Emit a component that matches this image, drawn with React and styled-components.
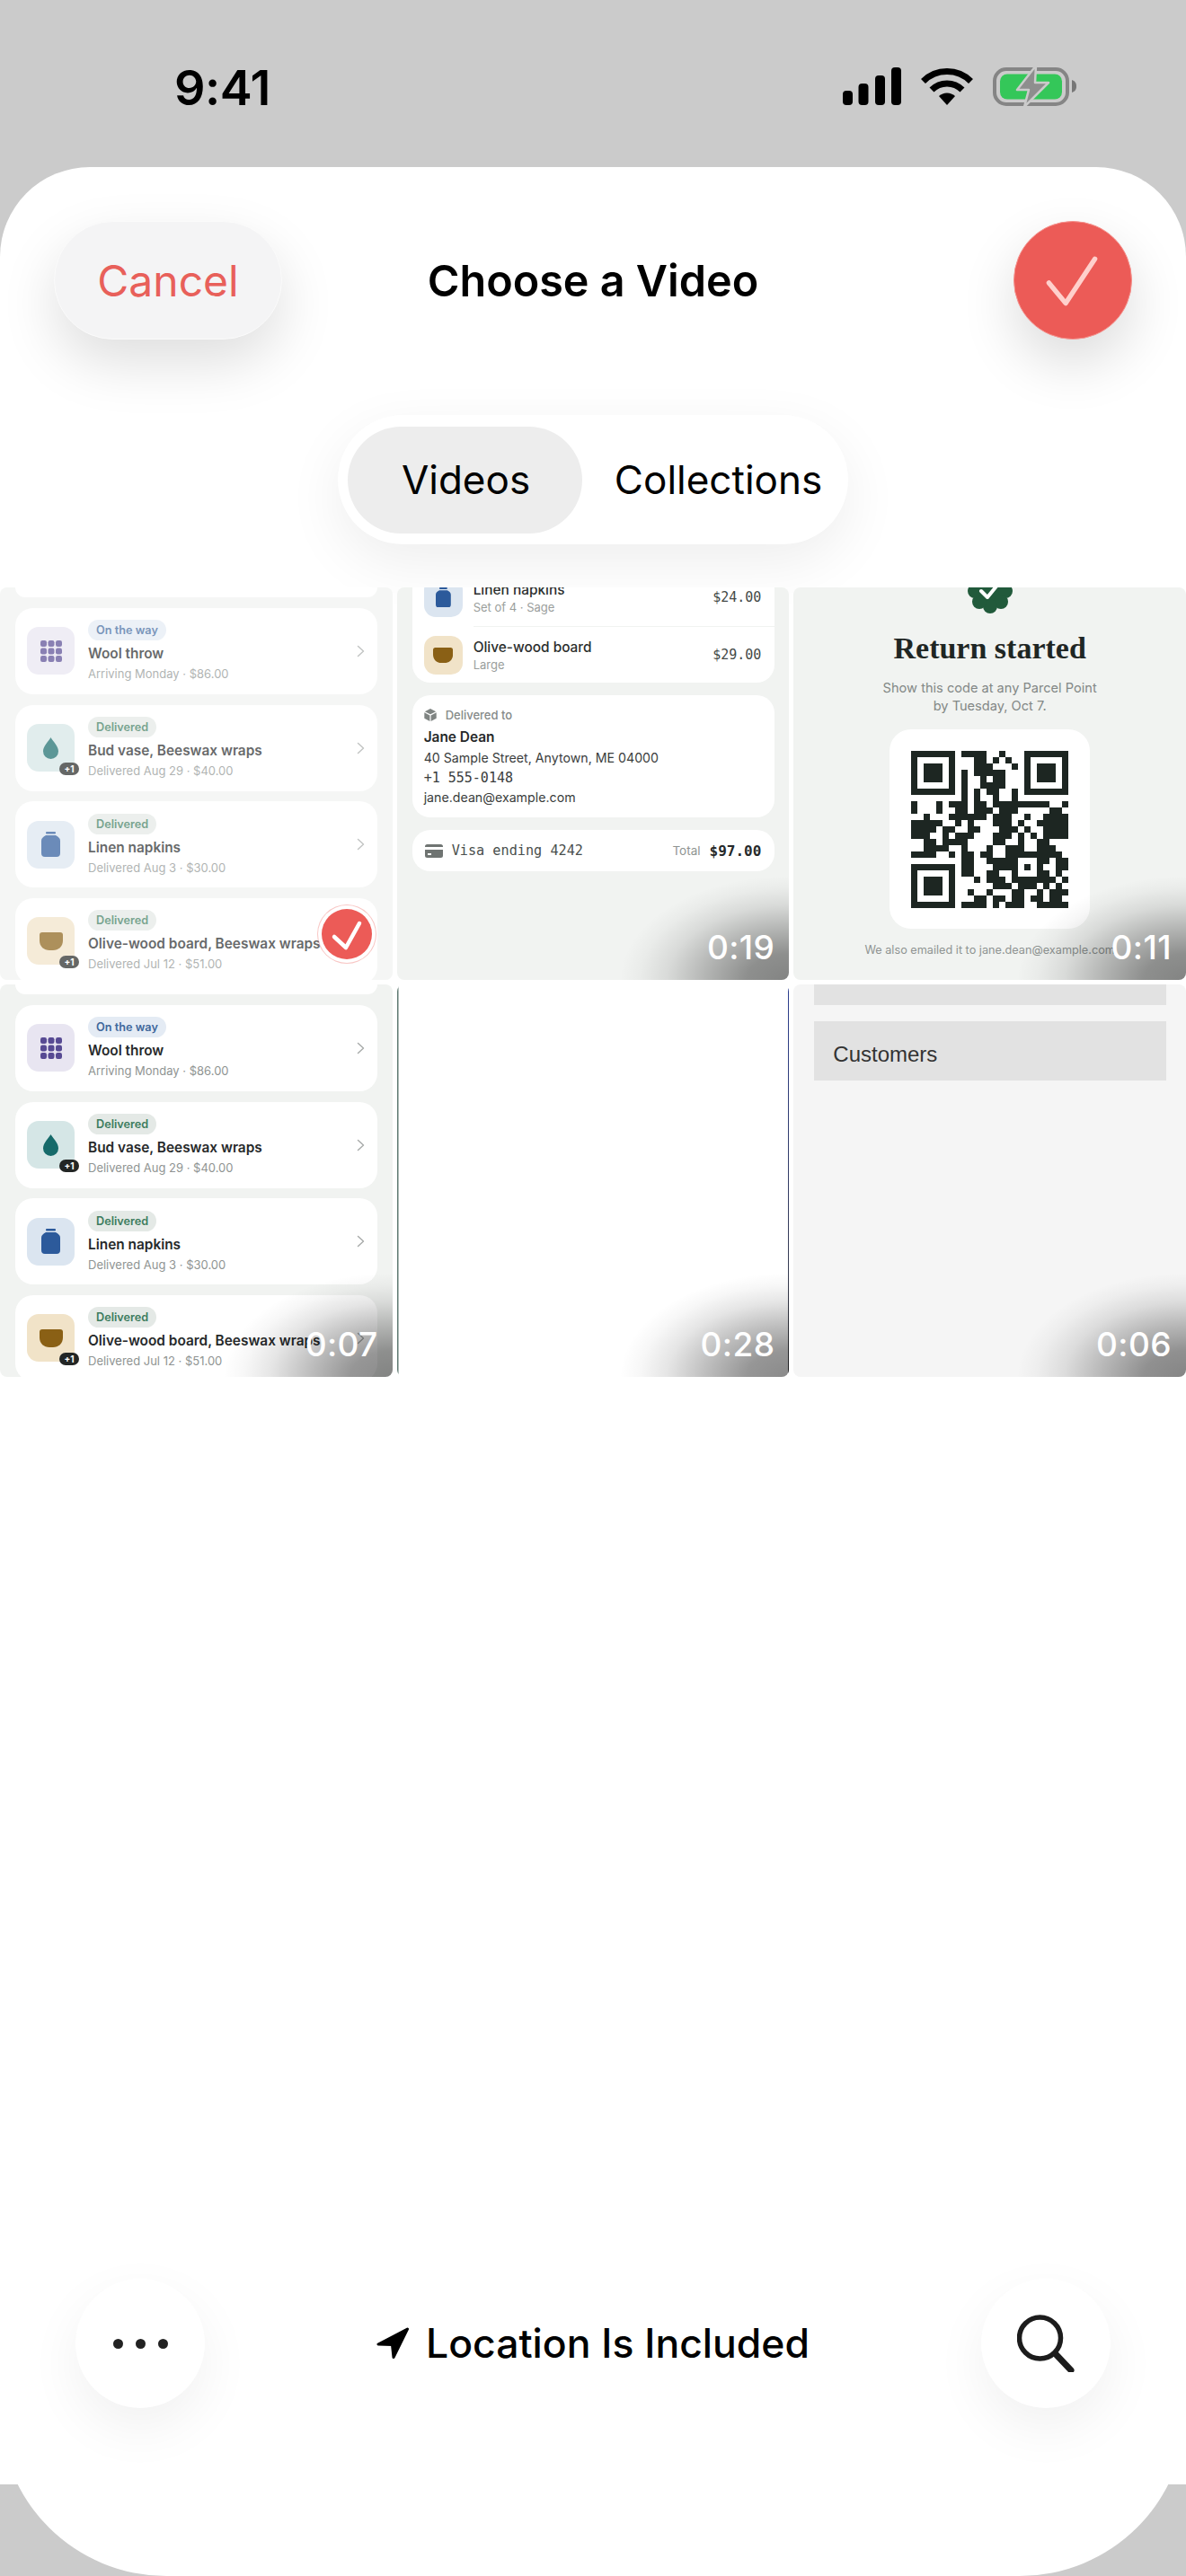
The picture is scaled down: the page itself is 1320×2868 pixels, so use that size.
import React from "react";
import styled, { createGlobalStyle } from "styled-components";

const Global = createGlobalStyle`
  html, body { margin: 0; padding: 0; background: #cbcbcb; }
  * { box-sizing: border-box; }
  body { font-family: Inter, "Liberation Sans", sans-serif; }
`;

const MONO = `"DejaVu Sans Mono", "Liberation Mono", monospace`;

const Page = styled.div`
  width: 1320px;
  height: 2868px;
  display: flex;
  flex-direction: column;
  background: #cbcbcb;
  overflow: hidden;
`;
const StatusBar = styled.div`
  height: 186px;
  flex: none;
  padding: 75px 122px 0 194px;
  display: flex;
  justify-content: space-between;
  align-items: flex-start;
`;
const Clock = styled.div`
  font-size: 54px;
  line-height: 46px;
  font-weight: 600;
  color: #000;
  letter-spacing: -0.5px;
`;
const StatusIcons = styled.div`
  display: flex;
  align-items: center;
  gap: 22px;
  height: 42px;
`;
const Sheet = styled.div`
  flex: 1;
  background: #fff;
  border-radius: 100px 100px 185px 185px;
  display: flex;
  flex-direction: column;
`;
const Header = styled.div`
  padding: 60px 60px 0;
  display: grid;
  grid-template-columns: 1fr auto 1fr;
  align-items: center;
`;
const CancelButton = styled.div`
  justify-self: start;
  width: 254px;
  height: 132px;
  border-radius: 66px;
  background: #f4f4f5;
  border: 1.5px solid #fbfbfb;
  box-shadow: 0 26px 62px rgba(0, 0, 0, 0.13);
  color: #e8605a;
  font-size: 48px;
  display: flex;
  align-items: center;
  justify-content: center;
`;
const Title = styled.div`
  font-size: 48.5px;
  font-weight: 600;
  color: #000;
`;
const ConfirmButton = styled.div`
  justify-self: end;
  width: 132px;
  height: 132px;
  border-radius: 50%;
  background: #ec5b57;
  border: 1.5px solid #f58f8a;
  box-shadow: 0 26px 62px rgba(0, 0, 0, 0.14);
  display: flex;
`;
const Segments = styled.div`
  align-self: center;
  margin-top: 84px;
  width: 568px;
  height: 144px;
  border-radius: 72px;
  padding: 12px 11px;
  background: #fff;
  box-shadow: 0 20px 64px rgba(0, 0, 0, 0.07);
  display: flex;
  align-items: center;
`;
const Segment = styled.div`
  flex: ${(p) => (p.$active ? "0 0 261px" : "1")};
  height: 119px;
  border-radius: 60px;
  background: ${(p) => (p.$active ? "#ededed" : "transparent")};
  display: flex;
  align-items: center;
  justify-content: center;
  padding-left: ${(p) => (p.$active ? 2 : 18)}px;
  font-size: 44px;
  color: #000;
`;
const Grid = styled.div`
  margin-top: 48px;
  display: grid;
  grid-template-columns: repeat(3, 1fr);
  grid-auto-rows: 437px;
  gap: 5px;
`;
const Cell = styled.div`
  position: relative;
  overflow: hidden;
  border-radius: 8px;
  background: ${(p) => p.$bg || "#f1f3f1"};
  color: #26292a;
`;
const BlankCell = styled(Cell)`
  background: linear-gradient(#2b3d8f, #3a3a3a) right / 1.5px 100% no-repeat,
    linear-gradient(#5f7a72, #5f7a72) left / 1.5px 100% no-repeat, #fff;
`;
const Wash = styled.div`
  position: absolute;
  inset: 0;
  background: rgba(255, 255, 255, 0.3);
`;
const TimeShade = styled.div`
  position: absolute;
  inset: 0;
  display: flex;
  align-items: flex-end;
  justify-content: flex-end;
  padding: 0 16px 14px 0;
  background: radial-gradient(
    ellipse 188px 116px at 100% 100%,
    rgba(0, 0, 0, 0.46) 0,
    rgba(0, 0, 0, 0.41) 25%,
    rgba(0, 0, 0, 0.25) 50%,
    rgba(0, 0, 0, 0.1) 72%,
    rgba(0, 0, 0, 0.03) 88%,
    rgba(0, 0, 0, 0) 100%
  );
  color: #fff;
  font-size: 37px;
  line-height: 44px;
  font-weight: 500;
  letter-spacing: 0.4px;
`;
const PickBadge = styled.div`
  position: absolute;
  right: 23px;
  bottom: 23px;
  width: 56px;
  height: 56px;
  border-radius: 50%;
  background: #ec5b57;
  box-shadow: 0 0 0 4px #fff, 0 0 0 5px rgba(236, 91, 87, 0.35);
  display: flex;
`;

/* order list shot */
const List = styled.div`
  display: flex;
  flex-direction: column;
  gap: 11.67px;
  padding: 0 17px;
`;
const CardStub = styled.div`
  height: 11.33px;
  background: #fff;
  border-radius: 0 0 18px 18px;
`;
const OrderCard = styled.div`
  flex: none;
  height: 96px;
  background: #fff;
  border-radius: 20px;
  padding: 0 14px 0 13px;
  display: flex;
  align-items: center;
  gap: 15px;
`;
const Thumb = styled.div`
  position: relative;
  flex: none;
  width: ${(p) => p.$size || 53}px;
  height: ${(p) => p.$size || 53}px;
  border-radius: 13px;
  background: ${(p) => p.$bg};
  display: flex;
  align-items: center;
  justify-content: center;
`;
const MoreBadge = styled.div`
  position: absolute;
  right: -5px;
  bottom: -4px;
  width: 22px;
  height: 14px;
  border-radius: 7px;
  background: #232625;
  color: #fff;
  font-size: 10px;
  font-weight: 700;
  line-height: 14px;
  text-align: center;
`;
const OrderText = styled.div`
  flex: 1;
  min-width: 0;
  padding-top: 2px;
  white-space: nowrap;
`;
const Pill = styled.div`
  display: inline-block;
  height: 23px;
  padding: 0 9px;
  border-radius: 12px;
  font-size: 12.7px;
  line-height: 23px;
  font-weight: 600;
  background: ${(p) => (p.$way ? "#e4ebf4" : "#e4e9e6")};
  color: ${(p) => (p.$way ? "#40689c" : "#3d7c5e")};
  vertical-align: top;
`;
const OrderTitle = styled.div`
  margin-top: 4px;
  font-size: 15.4px;
  line-height: 22px;
  font-weight: 600;
  color: #26292a;
`;
const OrderSub = styled.div`
  font-size: 13px;
  line-height: 22px;
  color: #8f9492;
`;

/* receipt shot */
const Receipt = styled.div`
  display: flex;
  flex-direction: column;
  gap: 14px;
  padding: 0 16px 0 17px;
`;
const Panel = styled.div`
  background: #fff;
  border-radius: 20px;
`;
const ItemsPanel = styled(Panel)`
  margin-top: -21px;
  padding-left: 13px;
`;
const ItemRow = styled.div`
  display: flex;
  align-items: center;
  gap: 12px;
  height: ${(p) => p.$h}px;
  padding-right: 15px;
`;
const ItemText = styled.div`
  flex: 1;
`;
const ItemName = styled.div`
  font-size: 15.4px;
  line-height: 21px;
  font-weight: 500;
  color: #2c2f2e;
`;
const ItemNote = styled.div`
  font-size: 13px;
  line-height: 18px;
  color: #9a9e9c;
`;
const Price = styled.div`
  font-family: ${MONO};
  font-size: 15px;
  color: #444a48;
`;
const Divider = styled.div`
  height: 1px;
  margin-left: 55px;
  background: #f1f3f1;
`;
const AddressPanel = styled(Panel)`
  height: 136px;
  padding: 12px 13px 0;
`;
const AddressHead = styled.div`
  display: flex;
  align-items: center;
  gap: 10px;
  height: 20px;
  font-size: 13px;
  font-weight: 500;
  color: #858a88;
`;
const AddressName = styled.div`
  margin-top: 3px;
  font-size: 15.4px;
  line-height: 24px;
  font-weight: 600;
  color: #26292a;
`;
const AddressLine = styled.div`
  font-size: ${(p) => (p.$mono ? 15 : 14.2)}px;
  line-height: 22px;
  color: #3a3d3c;
  font-family: ${(p) => (p.$mono ? MONO : "inherit")};
`;
const PayPanel = styled(Panel)`
  height: 46px;
  padding: 0 15px 0 14px;
  display: flex;
  align-items: center;
  gap: 10px;
`;
const PayName = styled.div`
  flex: 1;
  font-family: ${MONO};
  font-size: 15.2px;
  color: #4a4f4d;
`;
const PayLabel = styled.div`
  font-size: 13.5px;
  color: #8f9492;
`;
const PayTotal = styled.div`
  font-family: ${MONO};
  font-size: 16px;
  font-weight: 700;
  color: #26292a;
`;

/* return shot */
const ReturnShot = styled.div`
  display: flex;
  flex-direction: column;
  align-items: center;
`;
const Seal = styled.div`
  margin-top: -21px;
  display: flex;
`;
const ReturnTitle = styled.div`
  margin-top: 19px;
  font-family: "Liberation Serif", serif;
  font-weight: 700;
  font-size: 34px;
  line-height: 40px;
  color: #1f2624;
`;
const ReturnNote = styled.div`
  margin-top: 15px;
  font-size: 14.6px;
  line-height: 19.5px;
  text-align: center;
  color: #838886;
`;
const QrCard = styled.div`
  margin-top: 16px;
  width: 223px;
  height: 222px;
  border-radius: 24px;
  background: #fff;
  display: flex;
  align-items: center;
  justify-content: center;
`;
const ReturnFoot = styled.div`
  margin-top: 14px;
  font-size: 12.7px;
  line-height: 20px;
  color: #8f9492;
  white-space: nowrap;
`;

/* settings shot */
const SettingsShot = styled.div`
  padding: 0 22px 0 23px;
`;
const GreyRow = styled.div`
  height: ${(p) => p.$h}px;
  margin-bottom: 18px;
  background: #e2e2e2;
  padding: 23px 21px 0;
  font-family: "Liberation Sans", sans-serif;
  font-size: 24px;
  line-height: 28px;
  color: #333;
`;

/* footer */
const Footer = styled.div`
  margin-top: auto;
  height: 296px;
  flex: none;
  overflow: hidden;
  background: #fff;
  padding: 67px 84px 0;
  display: grid;
  grid-template-columns: 144px 1fr 144px;
  align-items: start;
`;
const RoundButton = styled.div`
  width: 144px;
  height: 144px;
  border-radius: 50%;
  background: #fff;
  box-shadow: 0 22px 60px rgba(0, 0, 0, 0.06);
  display: flex;
  align-items: center;
  justify-content: center;
  gap: 14px;
`;
const Dot = styled.span`
  width: 11px;
  height: 11px;
  border-radius: 50%;
  background: #222;
`;
const Location = styled.div`
  height: 144px;
  display: flex;
  align-items: center;
  justify-content: center;
  gap: 18px;
  font-size: 44.5px;
  font-weight: 500;
  color: #000;
`;
const Chin = styled.div`
  height: 102px;
  flex: none;
`;

const Signal = () => (
  <svg width="65" height="42" viewBox="0 0 65 42">
    <rect x="0" y="26" width="11" height="16" rx="4" fill="#000" />
    <rect x="17.5" y="18" width="11" height="24" rx="4" fill="#000" />
    <rect x="36" y="9" width="11" height="33" rx="4" fill="#000" />
    <rect x="54" y="0" width="11" height="42" rx="4" fill="#000" />
  </svg>
);
const Wifi = () => (
  <svg width="58" height="42" viewBox="0 0 58 42">
    <path d="M2.5 15.5 A37.5 37.5 0 0 1 55.5 15.5" fill="none" stroke="#000" strokeWidth="7" />
    <path d="M12 25 A24 24 0 0 1 46 25" fill="none" stroke="#000" strokeWidth="7" />
    <path d="M29 42 L20 32 A13 13 0 0 1 38 32 Z" fill="#000" />
  </svg>
);
const Battery = () => (
  <svg width="93" height="46" viewBox="0 0 93 46">
    <rect x="2" y="4" width="81" height="39" rx="13" fill="none" stroke="#858585" strokeWidth="4" />
    <rect x="8" y="9.5" width="69" height="28" rx="8" fill="#34c759" />
    <path d="M88 16 C91 17 93 19 93 23 C93 27 91 29 88 30 Z" fill="#777" />
    <path d="M48 0 L27 27 L40 27 L35 46 L62 19 L47 19 Z" fill="#8e8e8e" stroke="#cbcbcb" strokeWidth="2.5" strokeLinejoin="round" />
  </svg>
);
const Tick = ({ d, w, c }) => (
  <svg width="100%" height="100%" viewBox="0 0 132 132">
    <path d={d} fill="none" stroke={c} strokeWidth={w} strokeLinecap="round" strokeLinejoin="round" />
  </svg>
);
const SmallTick = () => (
  <svg width="56" height="56" viewBox="0 0 56 56">
    <path d="M14 31 L27 43 L42 16" fill="none" stroke="#fff" strokeWidth="4.5" strokeLinecap="round" strokeLinejoin="round" />
  </svg>
);
const Chevron = () => (
  <svg width="9" height="14" viewBox="0 0 9 14">
    <path d="M1.5 1.5 L7.5 7 L1.5 12.5" fill="none" stroke="#a7aaa9" strokeWidth="1.4" strokeLinecap="round" strokeLinejoin="round" />
  </svg>
);
const GridIcon = () => (
  <svg width="24" height="24" viewBox="0 0 24 24" fill="#574a93">
    {[0, 8.5, 17].flatMap((y) =>
      [0, 8.5, 17].map((x) => <rect key={`${x}-${y}`} x={x} y={y} width="7" height="7" rx="2.2" />)
    )}
  </svg>
);
const DropIcon = () => (
  <svg width="17" height="24" viewBox="0 0 17 24">
    <path d="M8.5 0 C11 4.5 17 9.5 17 15.5 A8.5 8.5 0 0 1 0 15.5 C0 9.5 6 4.5 8.5 0 Z" fill="#166a6a" />
  </svg>
);
const JarIcon = ({ s = 1 }) => (
  <svg width={21 * s} height={28 * s} viewBox="0 0 21 28" fill="#2c5a9b">
    <rect x="5" y="0" width="11" height="2.5" rx="1" />
    <path d="M5 4 H16 C19 6 21 7 21 10 V24 A4 4 0 0 1 17 28 H4 A4 4 0 0 1 0 24 V10 C0 7 2 6 5 4 Z" />
  </svg>
);
const BowlIcon = ({ s = 1 }) => (
  <svg width={26 * s} height={20 * s} viewBox="0 0 26 20">
    <path d="M3 0 H23 A3 3 0 0 1 26 3 V9 C26 16 21 20 15 20 H11 C5 20 0 16 0 9 V3 A3 3 0 0 1 3 0 Z" fill="#8a6015" />
  </svg>
);
const BoxIcon = () => (
  <svg width="14" height="14" viewBox="0 0 14 14" fill="#7f8482">
    <path d="M7 0 L13.2 3.2 L7 6.3 L0.8 3.2 Z" />
    <path d="M0.3 4.3 L6.4 7.4 V14 L0.3 10.8 Z" />
    <path d="M13.7 4.3 L7.6 7.4 V14 L13.7 10.8 Z" />
  </svg>
);
const CardIcon = () => (
  <svg width="20" height="15" viewBox="0 0 20 15">
    <path d="M2.5 0 H17.5 A2.5 2.5 0 0 1 20 2.5 V3 H0 V2.5 A2.5 2.5 0 0 1 2.5 0 Z" fill="#6f7472" />
    <path d="M0 6 H20 V12.5 A2.5 2.5 0 0 1 17.5 15 H2.5 A2.5 2.5 0 0 1 0 12.5 Z M3 10 V12 H7 V10 Z" fill="#6f7472" fillRule="evenodd" />
  </svg>
);
const SealIcon = () => (
  <svg width="50" height="50" viewBox="0 0 50 50">
    <g fill="#215a3b">
      <circle cx="25" cy="25" r="18" />
      {[0, 45, 90, 135, 180, 225, 270, 315].map((a) => (
        <circle key={a} cx={25 + 17 * Math.cos((a * Math.PI) / 180)} cy={25 + 17 * Math.sin((a * Math.PI) / 180)} r="8" />
      ))}
    </g>
    <path d="M15 25 L22 32 L35 16" fill="none" stroke="#fff" strokeWidth="4" strokeLinecap="round" strokeLinejoin="round" />
  </svg>
);
const Arrow = () => (
  <svg width="37" height="36" viewBox="0 0 37 36">
    <path d="M34.5 2 L2 19 L17.5 19.5 L19 33.5 Z" fill="#000" stroke="#000" strokeWidth="3" strokeLinejoin="round" />
  </svg>
);
const Search = () => (
  <svg width="64" height="64" viewBox="0 0 64 64">
    <circle cx="25.5" cy="26" r="23" fill="none" stroke="#1c1c1c" strokeWidth="5.5" />
    <path d="M43 44 L60 62" stroke="#1c1c1c" strokeWidth="7" strokeLinecap="round" />
  </svg>
);

const QR_ROWS = [
  "1111111011110010001111111",
  "1000001000110101001000001",
  "1011101000111000101011101",
  "1011101010111110001011101",
  "1011101010010110001011101",
  "1000001010011110001000001",
  "1111111010101100101111111",
  "0000000010100100100000000",
  "1000101110110111111111001",
  "1000100110111011100000110",
  "0010001111110111001001111",
  "1111100101000111010011111",
  "1111011001100011101001111",
  "1110010111000111010101111",
  "0011011110000110010011000",
  "0011110010001001110011100",
  "1111001011011001011001110",
  "0000000011001111110111011",
  "1111111011000111000010011",
  "1000001011001100111011010",
  "1011101000101110000001101",
  "1011101000000111011101010",
  "1011101001001000110010111",
  "1000001000110110110110110",
  "1111111011110101110011111",
];
const qrCell = (x, y) => {
  const dx = Math.abs(x - 18);
  const dy = Math.abs(y - 18);
  if (dx <= 2 && dy <= 2) return Math.max(dx, dy) !== 1;
  return QR_ROWS[y][x] === "1";
};
const Qr = () => (
  <svg width="175" height="175" viewBox="0 0 25 25" shapeRendering="crispEdges">
    {QR_ROWS.flatMap((row, y) =>
      [...row].map((_, x) => (qrCell(x, y) ? <rect key={`${x}-${y}`} x={x} y={y} width="1" height="1" fill="#1d2622" /> : null))
    )}
  </svg>
);

const ORDERS = [
  { icon: <GridIcon />, bg: "#e8e5f1", way: true, status: "On the way", title: "Wool throw", sub: "Arriving Monday · $86.00" },
  { icon: <DropIcon />, bg: "#d5e6e6", more: true, status: "Delivered", title: "Bud vase, Beeswax wraps", sub: "Delivered Aug 29 · $40.00" },
  { icon: <JarIcon />, bg: "#dbe5f0", status: "Delivered", title: "Linen napkins", sub: "Delivered Aug 3 · $30.00" },
  { icon: <BowlIcon />, bg: "#f1e3c8", more: true, status: "Delivered", title: "Olive-wood board, Beeswax wraps", sub: "Delivered Jul 12 · $51.00" },
];

const OrderList = () => (
  <List>
    <CardStub />
    {ORDERS.map((o) => (
      <OrderCard key={o.title}>
        <Thumb $bg={o.bg}>
          {o.icon}
          {o.more && <MoreBadge>+1</MoreBadge>}
        </Thumb>
        <OrderText>
          <Pill $way={o.way}>{o.status}</Pill>
          <OrderTitle>{o.title}</OrderTitle>
          <OrderSub>{o.sub}</OrderSub>
        </OrderText>
        <Chevron />
      </OrderCard>
    ))}
  </List>
);

const Time = ({ children }) => <TimeShade>{children}</TimeShade>;

export default function App() {
  return (
    <Page>
      <Global />
      <StatusBar>
        <Clock>9:41</Clock>
        <StatusIcons>
          <Signal />
          <Wifi />
          <Battery />
        </StatusIcons>
      </StatusBar>
      <Sheet>
        <Header>
          <CancelButton>Cancel</CancelButton>
          <Title>Choose a Video</Title>
          <ConfirmButton>
            <Tick d="M39 69 L58 92 L91 42" w={5.5} c="#ffd0cc" />
          </ConfirmButton>
        </Header>
        <Segments>
          <Segment $active>Videos</Segment>
          <Segment>Collections</Segment>
        </Segments>
        <Grid>
          <Cell>
            <OrderList />
            <Wash />
            <PickBadge>
              <SmallTick />
            </PickBadge>
          </Cell>
          <Cell>
            <Receipt>
              <ItemsPanel>
                <ItemRow $h={64}>
                  <Thumb $size={43} $bg="#dbe5f0">
                    <JarIcon s={0.8} />
                  </Thumb>
                  <ItemText>
                    <ItemName>Linen napkins</ItemName>
                    <ItemNote>Set of 4 · Sage</ItemNote>
                  </ItemText>
                  <Price>$24.00</Price>
                </ItemRow>
                <Divider />
                <ItemRow $h={62}>
                  <Thumb $size={43} $bg="#f1e3c8">
                    <BowlIcon s={0.85} />
                  </Thumb>
                  <ItemText>
                    <ItemName>Olive-wood board</ItemName>
                    <ItemNote>Large</ItemNote>
                  </ItemText>
                  <Price>$29.00</Price>
                </ItemRow>
              </ItemsPanel>
              <AddressPanel>
                <AddressHead>
                  <BoxIcon />
                  Delivered to
                </AddressHead>
                <AddressName>Jane Dean</AddressName>
                <AddressLine>40 Sample Street, Anytown, ME 04000</AddressLine>
                <AddressLine $mono>+1 555-0148</AddressLine>
                <AddressLine>jane.dean@example.com</AddressLine>
              </AddressPanel>
              <PayPanel>
                <CardIcon />
                <PayName>Visa ending 4242</PayName>
                <PayLabel>Total</PayLabel>
                <PayTotal>$97.00</PayTotal>
              </PayPanel>
            </Receipt>
            <Time>0:19</Time>
          </Cell>
          <Cell>
            <ReturnShot>
              <Seal>
                <SealIcon />
              </Seal>
              <ReturnTitle>Return started</ReturnTitle>
              <ReturnNote>
                Show this code at any Parcel Point
                <br />
                by Tuesday, Oct 7.
              </ReturnNote>
              <QrCard>
                <Qr />
              </QrCard>
              <ReturnFoot>We also emailed it to jane.dean@example.com</ReturnFoot>
            </ReturnShot>
            <Time>0:11</Time>
          </Cell>
          <Cell>
            <OrderList />
            <Time>0:07</Time>
          </Cell>
          <BlankCell>
            <Time>0:28</Time>
          </BlankCell>
          <Cell $bg="#f5f5f5">
            <SettingsShot>
              <GreyRow $h={20} />
              <GreyRow $h={66}>Customers</GreyRow>
            </SettingsShot>
            <Time>0:06</Time>
          </Cell>
        </Grid>
        <Footer>
          <RoundButton>
            <Dot />
            <Dot />
            <Dot />
          </RoundButton>
          <Location>
            <Arrow />
            Location Is Included
          </Location>
          <RoundButton>
            <Search />
          </RoundButton>
        </Footer>
        <Chin />
      </Sheet>
    </Page>
  );
}
